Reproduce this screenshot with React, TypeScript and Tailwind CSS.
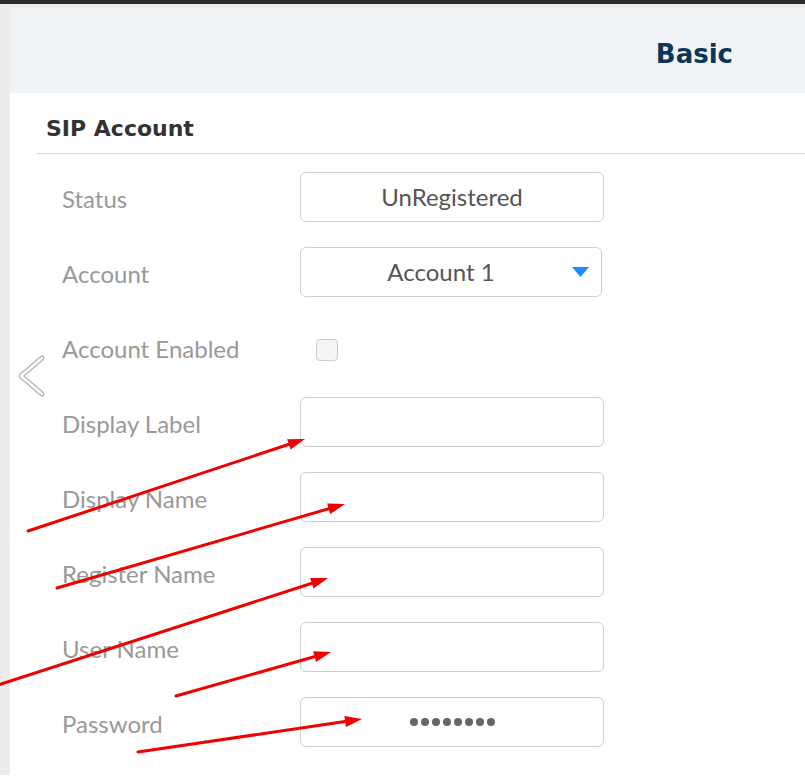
const rows = [
  { label: 'Display Label' },
  { label: 'Display Name' },
  { label: 'Register Name' },
  { label: 'User Name' },
];

// red callout arrows drawn over the form
const arrows: [number, number, number, number][] = [
  [28, 531, 305, 439],
  [57, 588, 345, 504],
  [-2, 685, 328, 578],
  [176, 696, 331, 652],
  [138, 752, 362, 719],
];

function headPoints(x1: number, y1: number, x2: number, y2: number) {
  const len = 17;
  const half = 5.5;
  const a = Math.atan2(y2 - y1, x2 - x1);
  const bx = x2 - len * Math.cos(a);
  const by = y2 - len * Math.sin(a);
  const nx = -Math.sin(a) * half;
  const ny = Math.cos(a) * half;
  return `${x2},${y2} ${bx + nx},${by + ny} ${bx - nx},${by - ny}`;
}

function Arrows() {
  return (
    <svg className="pointer-events-none absolute left-0 top-0" width="805" height="779">
      {arrows.map(([x1, y1, x2, y2], i) => {
        const a = Math.atan2(y2 - y1, x2 - x1);
        const ex = x2 - 12 * Math.cos(a);
        const ey = y2 - 12 * Math.sin(a);
        return (
          <g key={i}>
            <line x1={x1} y1={y1} x2={ex} y2={ey} stroke="#f20000" strokeWidth="3" strokeLinecap="round" />
            <polygon points={headPoints(x1, y1, x2, y2)} fill="#f20000" />
          </g>
        );
      })}
    </svg>
  );
}

function Label({ children }: { children: React.ReactNode }) {
  return <div className="mt-[4px] w-[238px] shrink-0 text-[24px] text-[#999999]">{children}</div>;
}

function Box({ children }: { children?: React.ReactNode }) {
  return (
    <div className="flex h-[50px] w-[304px] items-center justify-center rounded-[6px] border border-[#cfcfcf] bg-white text-[24px] text-[#555555]">
      {children}
    </div>
  );
}

export default function App() {
  return (
    <div
      className="relative h-[779px] w-[805px] overflow-hidden bg-white"
      style={{ fontFamily: 'Lato, "Open Sans", sans-serif' }}
    >
      {/* window top edge */}
      <div className="h-[4px] bg-[#2b2b2b]" />
      <div className="h-[4px] bg-[#ececec]" />

      <div className="flex">
        {/* left gutter */}
        <div className="h-[767px] w-[10px] shrink-0 bg-[#ececec]" />

        <div className="flex-1">
          {/* page header */}
          <div className="flex h-[85px] items-center justify-end bg-[#f0f4f7] pr-[72px] pt-[8px]">
            <h1
              className="text-[26px] font-bold text-[#0b365a]"
              style={{ fontFamily: '"DejaVu Sans", Verdana, sans-serif' }}
            >
              Basic
            </h1>
          </div>

          {/* SIP Account section */}
          <div className="pl-[26px]">
            <h2
              className="pl-[10px] pt-[20px] pb-[8px] text-[22px] font-bold leading-[32px] text-[#333333]"
              style={{ fontFamily: '"DejaVu Sans", Verdana, sans-serif' }}
            >
              SIP Account
            </h2>
            <div className="h-px bg-[#d8d8d8]" />

            <div className="flex flex-col gap-[25px] pl-[26px] pt-[18px]">
              <div className="flex h-[50px] items-center">
                <Label>Status</Label>
                <Box>UnRegistered</Box>
              </div>

              <div className="flex h-[50px] items-center">
                <Label>Account</Label>
                <div className="relative flex h-[50px] w-[302px] items-center justify-center rounded-[6px] border border-[#cfcfcf] bg-white pr-[20px] text-[24px] text-[#555555]">
                  Account 1
                  <svg className="absolute right-[12px] top-[19px]" width="17" height="10" viewBox="0 0 17 10">
                    <path d="M0 0 H17 L8.5 10 Z" fill="#1a8cff" />
                  </svg>
                </div>
              </div>

              <div className="flex h-[50px] items-center">
                <Label>Account Enabled</Label>
                <div className="ml-[16px] mt-[6px] h-[22px] w-[22px] rounded-[4px] border border-[#cccccc] bg-[#f5f5f5]" />
              </div>

              {rows.map((r) => (
                <div key={r.label} className="flex h-[50px] items-center">
                  <Label>{r.label}</Label>
                  <Box />
                </div>
              ))}

              <div className="flex h-[50px] items-center">
                <Label>Password</Label>
                <Box>
                  <div className="flex gap-[3px]">
                    {Array.from({ length: 8 }).map((_, i) => (
                      <span key={i} className="h-[8px] w-[8px] rounded-full bg-[#666666]" />
                    ))}
                  </div>
                </Box>
              </div>
            </div>
          </div>
        </div>
      </div>

      {/* back chevron */}
      <svg className="absolute left-[16px] top-[354px]" width="32" height="46" viewBox="0 0 32 46">
        <polyline points="26,4 5,22 26,40" fill="none" stroke="#b5b5b5" strokeWidth="5" strokeLinecap="round" strokeLinejoin="round" />
        <polyline points="26,4 5,22 26,40" fill="none" stroke="#ffffff" strokeWidth="2.5" strokeLinecap="round" strokeLinejoin="round" />
      </svg>

      <Arrows />
    </div>
  );
}
